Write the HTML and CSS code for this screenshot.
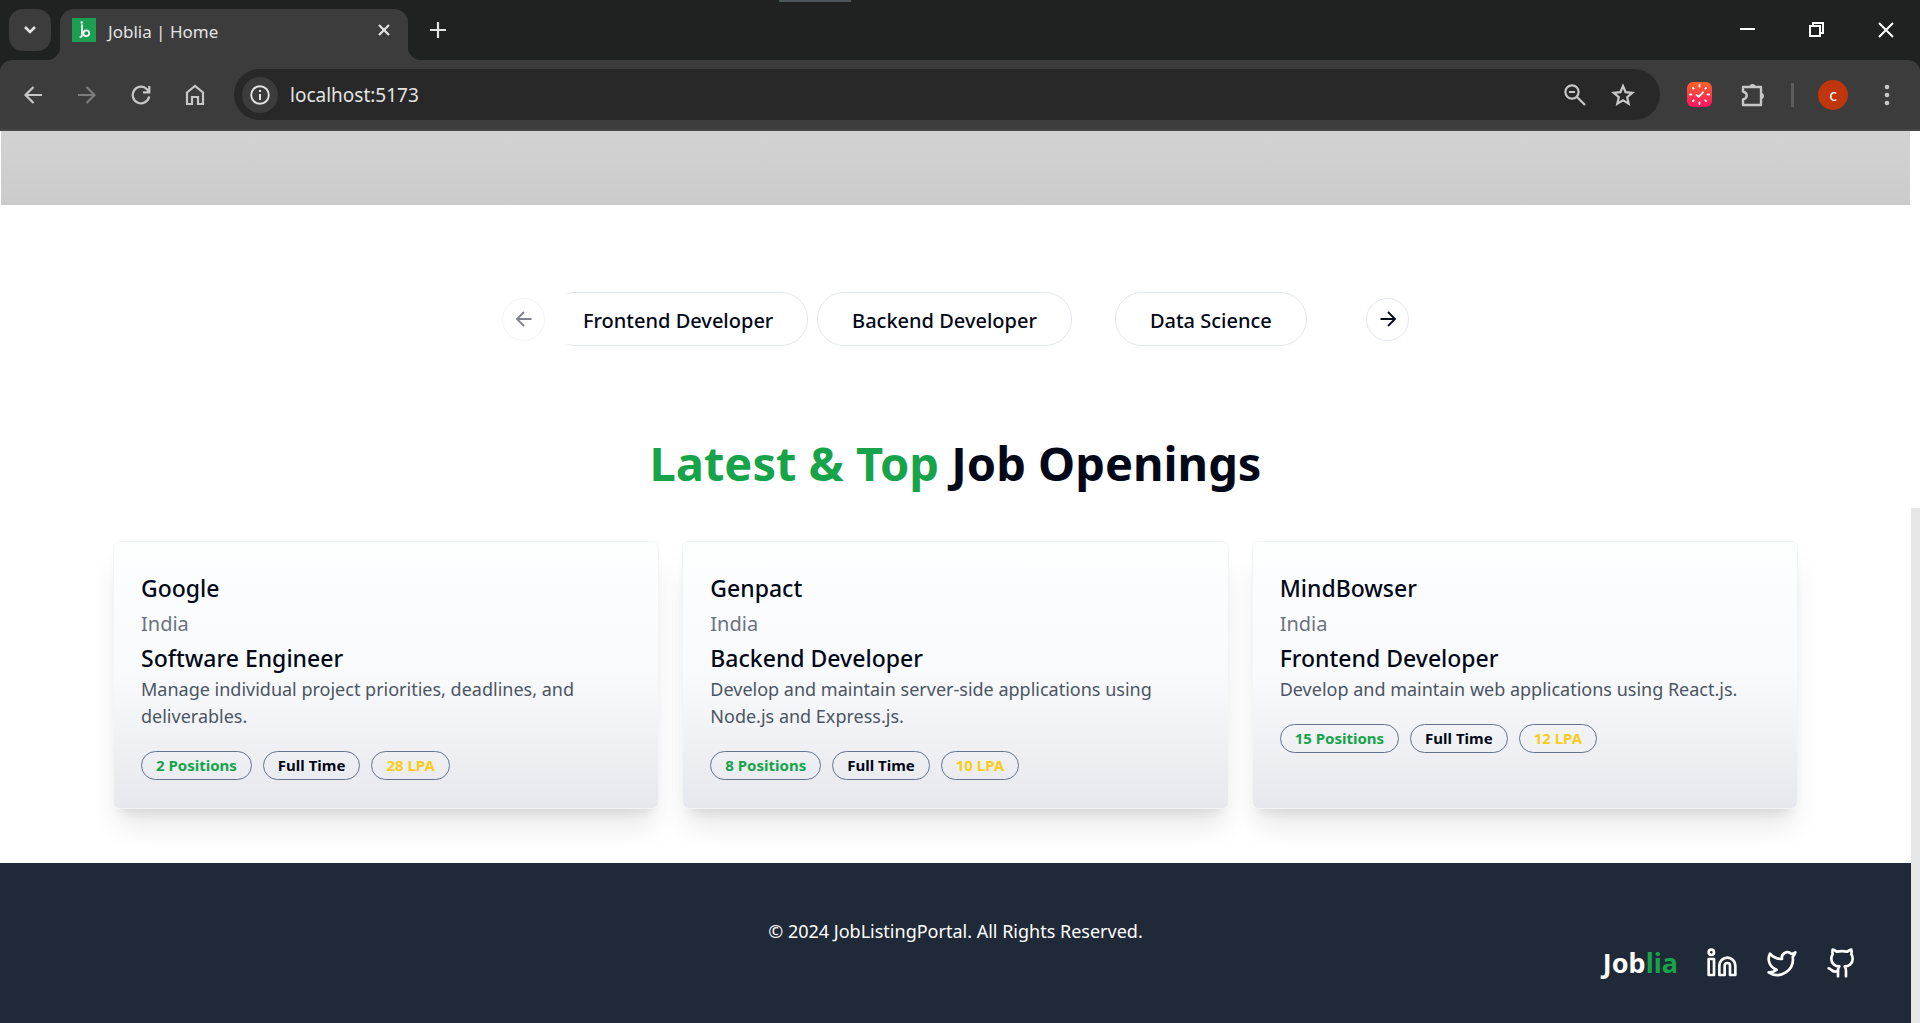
FILE: index.html
```html
<!DOCTYPE html>
<html lang="en">
<head>
<meta charset="utf-8">
<title>Joblia | Home</title>
<link rel="stylesheet" href="styles.css">
</head>
<body>
<div class="window">
  <header class="chrome">
    <div class="tabstrip">
      <button class="tab-search" aria-label="Search tabs">
        <svg width="14" height="10" viewBox="0 0 14 10"><path d="M2 2l5 5 5-5" fill="none" stroke="currentColor" stroke-width="2.6"/></svg>
      </button>
      <div class="tab">
        <svg class="favicon" width="24" height="24" viewBox="0 0 24 24"><rect width="24" height="24" fill="#1c9f50"/><g fill="none" stroke="#fff" stroke-width="1.7" stroke-linecap="round"><path d="M10 7v10q0 2-1.800 2"/><circle cx="14.300" cy="15.300" r="2.900"/></g><circle cx="9.700" cy="4.500" r="1.200" fill="#fff"/></svg>
        <span class="tab-title">Joblia | Home</span>
        <button class="tab-close" aria-label="Close tab">
          <svg width="14" height="14" viewBox="0 0 14 14"><path d="M2 2l10 10M12 2L2 12" stroke="currentColor" stroke-width="2.200"/></svg>
        </button>
      </div>
      <button class="new-tab" aria-label="New tab">
        <svg width="16" height="16" viewBox="0 0 16 16"><path d="M8 0v16M0 8h16" stroke="currentColor" stroke-width="2.200"/></svg>
      </button>
      <div class="window-controls">
        <button aria-label="Minimize"><svg width="16" height="16" viewBox="0 0 16 16"><path d="M0 7h15" stroke="currentColor" stroke-width="2"/></svg></button>
        <button aria-label="Restore"><svg width="16" height="16" viewBox="0 0 16 16"><path d="M1 4h10v10H1zM4 4V1h10v10H11" fill="none" stroke="currentColor" stroke-width="2"/></svg></button>
        <button aria-label="Close"><svg width="16" height="16" viewBox="0 0 16 16"><path d="M1 1l14 14M15 1L1 15" stroke="currentColor" stroke-width="2"/></svg></button>
      </div>
      <span class="drag-handle"></span>
    </div>
    <div class="toolbar">
      <button class="tool" aria-label="Back"><svg width="20" height="20" viewBox="0 0 20 20"><path d="M19 10H2.500M10.500 2l-8 8 8 8" fill="none" stroke="currentColor" stroke-width="2.200"/></svg></button>
      <button class="tool tool-off" aria-label="Forward"><svg width="20" height="20" viewBox="0 0 20 20"><path d="M1 10h16.500M9.500 2l8 8-8 8" fill="none" stroke="currentColor" stroke-width="2.200"/></svg></button>
      <button class="tool" aria-label="Reload"><svg width="20" height="20" viewBox="0 0 20 20"><path d="M18.200 11.500A8.300 8.300 0 1 1 16 4.200l2 2.300M18.300 1v6.300H12" fill="none" stroke="currentColor" stroke-width="2.200"/></svg></button>
      <button class="tool" aria-label="Home"><svg width="20" height="22" viewBox="0 0 20 22"><path d="M2 8.500l8-6.500 8 6.500V20h-5v-7H7v7H2z" fill="none" stroke="currentColor" stroke-width="2.200"/></svg></button>
      <div class="omnibox">
        <button class="site-info" aria-label="Site information"><svg width="20" height="20" viewBox="0 0 20 20"><circle cx="10" cy="10" r="8.800" fill="none" stroke="currentColor" stroke-width="1.900"/><path d="M10 9v6M10 5v2" stroke="currentColor" stroke-width="2"/></svg></button>
        <input class="url" type="text" value="localhost:5173" aria-label="Address">
        <button class="omni-btn" aria-label="Zoom"><svg width="22" height="22" viewBox="0 0 22 22"><g fill="none" stroke="currentColor" stroke-width="2.200"><circle cx="8" cy="8" r="6.600"/><path d="M13 13l8 8M5 8h6"/></g></svg></button>
        <button class="omni-btn" aria-label="Bookmark"><svg width="24" height="23" viewBox="0 0 24 23"><path d="M12 3l2.600 6.200 6.700.6-5.100 4.400 1.500 6.500-5.700-3.400-5.700 3.400 1.500-6.500-5.100-4.400 6.700-.6z" fill="none" stroke="currentColor" stroke-width="2.200"/></svg></button>
      </div>
      <button class="tool" aria-label="Task timer">
        <svg width="25" height="25" viewBox="0 0 25 25"><defs><linearGradient id="timer" x1="0" y1="0" x2="0" y2="1"><stop offset="0" stop-color="#fc6428"/><stop offset="1" stop-color="#fb1264"/></linearGradient></defs><rect width="25" height="25" rx="6" fill="url(#timer)"/><g stroke="#fff" stroke-width="1.800" stroke-linecap="round" fill="none"><path d="M12.500 3v1.500M12.500 20.500V22M3 12.500h1.500M20.500 12.500H22M6 6l.7.7M18.300 18.300l.7.7M19 6l-.7.700M6.700 18.300L6 19M9.500 12.800l2.200 2 4.300-4.500"/></g></svg>
      </button>
      <button class="tool" aria-label="Extensions">
        <svg width="26" height="26" viewBox="0 0 26 26"><path d="M3 5h18v18H3v-5.500c5-1.500 5-6.500 0-8z" fill="none" stroke="currentColor" stroke-width="2.400" stroke-linejoin="round"/><path d="M9.500 5a3 3 0 0 1 6 0zM21 11a3 3 0 0 1 0 6z" fill="currentColor"/></svg>
      </button>
      <span class="divider"></span>
      <button class="avatar" aria-label="Profile">c</button>
      <button class="menu" aria-label="Menu"><svg width="6" height="22" viewBox="0 0 6 22"><g fill="currentColor"><circle cx="3" cy="3" r="2.300"/><circle cx="3" cy="11" r="2.300"/><circle cx="3" cy="19" r="2.300"/></g></svg></button>
    </div>
  </header>

  <div class="viewport">
    <div class="page">
      <main>
        <div class="hero"></div>
        <section class="carousel" aria-label="Job categories">
          <button class="arrow" disabled aria-label="Previous"><svg width="18" height="18" viewBox="0 0 18 18"><path d="M16.500 9h-14M9 2L2 9l7 7" fill="none" stroke="currentColor" stroke-width="1.800"/></svg></button>
          <div class="slides">
            <div class="track">
              <button class="category">Frontend Developer</button>
              <button class="category">Backend Developer</button>
              <button class="category">Data Science</button>
            </div>
          </div>
          <button class="arrow" aria-label="Next"><svg width="18" height="18" viewBox="0 0 18 18"><path d="M1.500 9h14M9 2l7 7-7 7" fill="none" stroke="currentColor" stroke-width="1.800"/></svg></button>
        </section>
        <section class="openings">
          <h1><span class="green">Latest &amp; Top</span> Job Openings</h1>
          <div class="cards">
            <article class="card">
              <h2>Google</h2>
              <p class="place">India</p>
              <h3>Software Engineer</h3>
              <p class="about">Manage individual project priorities, deadlines, and deliverables.</p>
              <div class="badges"><span class="badge green">2 Positions</span><span class="badge">Full Time</span><span class="badge yellow">28 LPA</span></div>
            </article>
            <article class="card">
              <h2>Genpact</h2>
              <p class="place">India</p>
              <h3>Backend Developer</h3>
              <p class="about">Develop and maintain server-side applications using Node.js and Express.js.</p>
              <div class="badges"><span class="badge green">8 Positions</span><span class="badge">Full Time</span><span class="badge yellow">10 LPA</span></div>
            </article>
            <article class="card">
              <h2>MindBowser</h2>
              <p class="place">India</p>
              <h3>Frontend Developer</h3>
              <p class="about">Develop and maintain web applications using React.js.</p>
              <div class="badges"><span class="badge green">15 Positions</span><span class="badge">Full Time</span><span class="badge yellow">12 LPA</span></div>
            </article>
          </div>
        </section>
      </main>
      <footer class="footer">
        <p class="copyright">© 2024 JobListingPortal. All Rights Reserved.</p>
        <div class="footer-links">
          <a class="brand" href="#">Job<span class="green">lia</span></a>
          <a href="#" aria-label="LinkedIn"><svg class="social" viewBox="0 0 24 24"><path d="M16 8a6 6 0 0 1 6 6v7h-4v-7a2 2 0 0 0-2-2 2 2 0 0 0-2 2v7h-4v-7a6 6 0 0 1 6-6z"/><rect width="4" height="12" x="2" y="9"/><circle cx="4" cy="4" r="2"/></svg></a>
          <a href="#" aria-label="Twitter"><svg class="social" viewBox="0 0 24 24"><path d="M22 4s-.7 2.100-2 3.400c1.600 10-9.400 17.300-18 11.600 2.200.1 4.400-.6 6-2C3 15.500.5 9.600 3 5c2.200 2.600 5.600 4.100 9 4-.9-4.200 4-6.600 7-3.800 1.100 0 3-1.200 3-1.200z"/></svg></a>
          <a href="#" aria-label="GitHub"><svg class="social" viewBox="0 0 24 24"><path d="M15 22v-4a4.800 4.800 0 0 0-1-3.500c3 0 6-2 6-5.500.08-1.250-.27-2.480-1-3.500.28-1.150.28-2.350 0-3.500 0 0-1 0-3 1.500-2.640-.5-5.360-.5-8 0C6 2 5 2 5 2c-.3 1.150-.3 2.350 0 3.500A5.403 5.403 0 0 0 4 9c0 3.500 3 5.500 6 5.500-.39.490-.68 1.050-.85 1.650-.17.600-.22 1.230-.15 1.850v4"/><path d="M9 18c-4.510 2-5-2-7-2"/></svg></a>
        </div>
      </footer>
    </div>
    <div class="scrollbar"><span class="thumb"></span></div>
  </div>
</div>
</body>
</html>
```
FILE: styles.css
```css
* { box-sizing: border-box; margin: 0; padding: 0; }

body {
  font-family: "Noto Sans", "Open Sans", sans-serif;
  background: #fff;
  color: #020817;
}

button {
  font: inherit;
  color: inherit;
  background: none;
  border: 0;
  display: flex;
  align-items: center;
  justify-content: center;
}

a { color: inherit; text-decoration: none; }

svg { display: block; flex: none; }

.window {
  display: flex;
  flex-direction: column;
  min-height: 100vh;
}

/* Browser frame */
.chrome { background: #202221; color: #e3e3e3; }

.tabstrip {
  position: relative;
  display: flex;
  align-items: flex-end;
  height: 60px;
  padding-left: 9px;
}

.tab-search {
  width: 42px;
  height: 42px;
  margin: 0 9px 9px 0;
  border-radius: 14px;
  background: #3c3c3c;
}

.tab {
  position: relative;
  display: flex;
  align-items: center;
  gap: 12px;
  width: 348px;
  height: 51px;
  padding: 0 17px 9px 12px;
  border-radius: 14px 14px 0 0;
  background: #3c3c3c;
}

.tab::before,
.tab::after {
  content: "";
  position: absolute;
  bottom: 0;
  width: 14px;
  height: 14px;
}

.tab::before {
  right: 100%;
  background: radial-gradient(circle at 0 0, transparent 14px, #3c3c3c 15px);
}

.tab::after {
  left: 100%;
  background: radial-gradient(circle at 100% 0, transparent 14px, #3c3c3c 15px);
}

.tab-title { flex: 1; font-size: 17px; line-height: 24px; padding-top: 3px; }

.new-tab { width: 40px; height: 60px; margin-left: 10px; }

.window-controls { display: flex; margin-left: auto; color: #fff; }
.window-controls button { width: 69px; height: 60px; }

.drag-handle {
  position: absolute;
  top: 0;
  left: 779px;
  width: 72px;
  height: 2px;
  background: #4d5659;
}

.toolbar {
  display: flex;
  align-items: center;
  height: 71px;
  padding: 0 16px 0 6px;
  border-bottom: 2px solid #474747;
  border-radius: 12px 12px 0 0;
  background: #3c3c3c;
  color: #c7c7c7;
}

.tool { width: 54px; height: 51px; }
.tool-off { color: #7c7c7c; }

.omnibox {
  flex: 1;
  display: flex;
  align-items: center;
  height: 51px;
  margin: 0 12px;
  padding: 0 13px 0 8px;
  border-radius: 26px;
  background: #282828;
}

.site-info {
  width: 36px;
  height: 36px;
  border-radius: 50%;
  background: #3c3c3c;
  color: #e3e3e3;
}

.url {
  flex: 1;
  margin-left: 12px;
  border: 0;
  outline: 0;
  background: none;
  color: #e3e3e3;
  font: 19px/28px "Noto Sans", "Open Sans", sans-serif;
}

.omni-btn { width: 48px; height: 48px; }

.divider { width: 3px; height: 24px; margin: 0 24px 0 11px; background: #5c5c5c; }

.avatar {
  width: 30px;
  height: 30px;
  border-radius: 50%;
  background: #bf360c;
  color: #fff;
  font-size: 16px;
  line-height: 16px;
}

.menu { width: 34px; height: 48px; margin-left: 22px; }

/* Page */
.viewport { flex: 1; display: flex; }

.page {
  flex: 1;
  display: flex;
  flex-direction: column;
}

.scrollbar { display: flex; flex-direction: column; width: 9px; padding-top: 377px; }
.thumb { flex: 1; background: #e6e6e6; }

.hero {
  height: 74px;
  margin: 0 1px;
  background: linear-gradient(#d3d3d3, #cbcbcb);
}

.green { color: #16a34a; }
.yellow { color: #facc15; }

.carousel {
  display: flex;
  justify-content: center;
  align-items: center;
  gap: 22px;
  margin-top: 87px;
}

.arrow {
  width: 43px;
  height: 43px;
  border: 1px solid #e2e8f0;
  border-radius: 50%;
}

.arrow:disabled { opacity: 0.5; }

.slides { width: 777px; overflow: hidden; }

.track {
  display: grid;
  grid-template-columns: repeat(3, 1fr);
  justify-items: center;
  margin-left: -22px;
}

.category {
  height: 54px;
  padding: 2px 34px 0;
  border: 1px solid #e2e8f0;
  border-radius: 27px;
  font-size: 20px;
  font-weight: 500;
  white-space: nowrap;
}

.openings { padding: 81px 113px 54px; }

h1 {
  font-size: 47px;
  line-height: 72px;
  font-weight: 700;
  text-align: center;
}

.cards {
  display: grid;
  grid-template-columns: repeat(3, 1fr);
  gap: 23px;
  margin-top: 42px;
}

.card {
  padding: 29px 27px 28px;
  border: 1px solid #f3f4f6;
  border-radius: 7px;
  background: linear-gradient(#fdfefe, #f9fafc 50%, #e7e8ed);
  box-shadow: 0 22px 28px -6px rgba(0, 0, 0, 0.1), 0 9px 11px -7px rgba(0, 0, 0, 0.1);
}

h2, h3 { font-size: 23px; line-height: 35px; font-weight: 500; }

.place { font-size: 20px; line-height: 35px; color: #6b7280; }

.about { font-size: 18px; line-height: 27px; color: #4b5563; }

.badges { display: flex; gap: 11px; margin-top: 21px; }

.badge {
  padding: 0 14px;
  border: 1px solid #64748b;
  border-radius: 15px;
  font-size: 15px;
  line-height: 27px;
  font-weight: 700;
}

.footer {
  flex: 1;
  padding: 54px 53px 44px;
  background: #1f2937;
  color: #fff;
}

.copyright { font-size: 18px; line-height: 28px; text-align: center; }

.footer-links {
  display: flex;
  justify-content: flex-end;
  align-items: center;
  gap: 28px;
}

.brand { font-size: 27px; line-height: 36px; font-weight: 700; }

.social {
  width: 32px;
  height: 32px;
  fill: none;
  stroke: currentColor;
  stroke-width: 2;
  stroke-linecap: round;
  stroke-linejoin: round;
}
```
